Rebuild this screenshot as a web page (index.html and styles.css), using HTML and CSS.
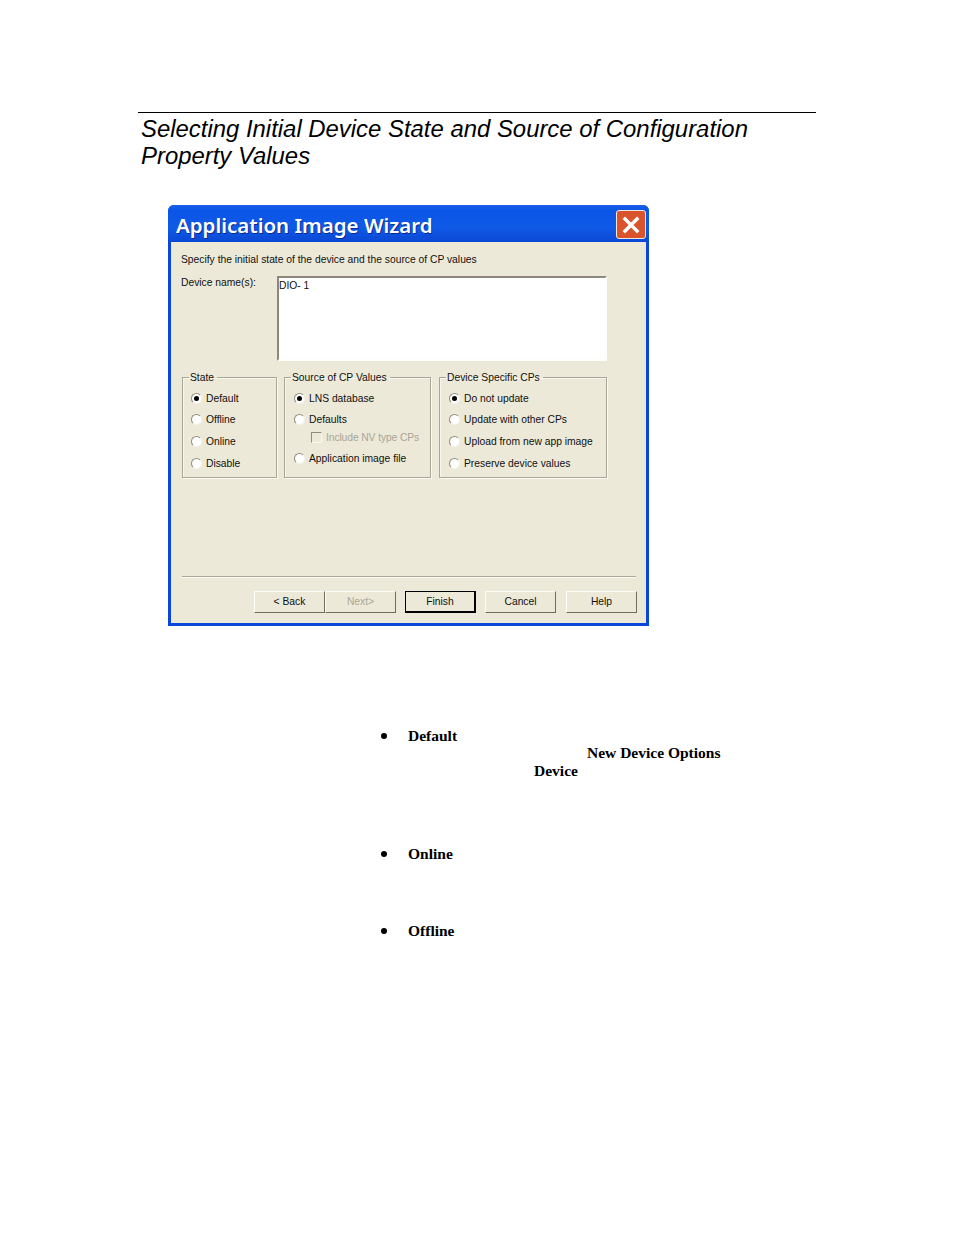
FILE: index.html
```html
<!DOCTYPE html>
<html lang="en">
  <head>
    <meta charset="UTF-8" />
    <meta name="viewport" content="width=device-width, initial-scale=1.0" />
    <title>Selecting Initial Device State</title>
    <link rel="stylesheet" href="styles.css">
  </head>
  <body>
    <main class="page">
      <h2 class="section-title">Selecting Initial Device State and Source of Configuration Property Values</h2>

      <div class="wizard">
        <div class="titlebar">
          <span class="titlebar-text">Application Image Wizard</span>
          <span class="close-btn">
            <svg width="20" height="20" viewBox="0 0 20 20">
              <path d="M4 4 L16 16 M16 4 L4 16" stroke="#fff" stroke-width="3.4" stroke-linecap="square" fill="none" />
            </svg>
          </span>
        </div>
        <div class="wizard-body">
          <p class="intro">Specify the initial state of the device and the source of CP values</p>
          <div class="name-row">
            <span class="name-label">Device name(s):</span>
            <div class="name-box">DIO- 1</div>
          </div>

          <div class="groups">
            <fieldset class="group group-state">
              <legend>State</legend>
              <div class="opt row-a checked"><i class="radio"></i>Default</div>
              <div class="opt row-b"><i class="radio"></i>Offline</div>
              <div class="opt row-c"><i class="radio"></i>Online</div>
              <div class="opt row-c"><i class="radio"></i>Disable</div>
            </fieldset>
            <fieldset class="group group-source">
              <legend>Source of CP Values</legend>
              <div class="opt row-a checked"><i class="radio"></i>LNS database</div>
              <div class="opt row-b"><i class="radio"></i>Defaults</div>
              <div class="opt opt-sub disabled"><i class="check"></i>Include NV type CPs</div>
              <div class="opt opt-last"><i class="radio"></i>Application image file</div>
            </fieldset>
            <fieldset class="group group-device">
              <legend>Device Specific CPs</legend>
              <div class="opt row-a checked"><i class="radio"></i>Do not update</div>
              <div class="opt row-b"><i class="radio"></i>Update with other CPs</div>
              <div class="opt row-c"><i class="radio"></i>Upload from new app image</div>
              <div class="opt row-c"><i class="radio"></i>Preserve device values</div>
            </fieldset>
          </div>

          <div class="separator"></div>

          <div class="buttons">
            <div class="btn">&lt; Back</div>
            <div class="btn btn-off">Next&gt;</div>
            <div class="btn btn-default">Finish</div>
            <div class="btn">Cancel</div>
            <div class="btn">Help</div>
          </div>
        </div>
      </div>

      <ul class="terms">
        <li class="term term-default">
          <b>Default</b>
          <div class="term-line term-line1"><b>New Device Options</b></div>
          <div class="term-line term-line2"><b>Device</b></div>
        </li>
        <li class="term term-online"><b>Online</b></li>
        <li class="term term-offline"><b>Offline</b></li>
      </ul>
    </main>
  </body>
</html>
```

FILE: styles.css
```css
* {
  box-sizing: border-box;
  margin: 0;
  padding: 0;
}
body {
  background: #fff;
  color: #000;
  font-family: "Liberation Serif", serif;
}
.page {
  padding: 112px 138px 0;
  height: 1235px;
  overflow: hidden;
}
.section-title {
  border-top: 1px solid #000;
  padding: 2px 0 0 3px;
  font-family: "Liberation Sans", sans-serif;
  font-size: 23.9px;
  font-style: italic;
  font-weight: 400;
  line-height: 27px;
  width: 678px;
  height: 93px;
}

/* dialog */
.wizard {
  width: 481px;
  height: 421px;
  margin-left: 30px;
  border-radius: 6px 6px 0 0;
  background: #0a46dc;
  padding: 0 2px 2px 2px;
  font-family: "Liberation Sans", sans-serif;
  font-size: 10.3px;
  color: #111;
}
.titlebar {
  height: 37px;
  margin: 0 -2px;
  padding: 2px 3px 0 8px;
  border-radius: 6px 6px 0 0;
  background: linear-gradient(#1b5fe8 0%, #0a55e6 15%, #0f5ae6 60%, #0a48d4 100%);
  display: flex;
  justify-content: space-between;
  align-items: center;
}
.titlebar-text {
  font-family: "Noto Sans", sans-serif;
  font-weight: 600;
  font-size: 20.5px;
  color: #fff;
  text-shadow: 1px 1px 0 #0a2a90;
}
.close-btn {
  width: 30px;
  height: 29px;
  border: 1px solid #f0e8e0;
  border-radius: 3px;
  background: #d9532c;
  display: flex;
  align-items: center;
  justify-content: center;
}
.wizard-body {
  height: 382px;
  background: #ece9d8;
  padding: 11px 11px 0 11px;
  border: 1px solid #0a46dc;
  border-top: 0;
}
.intro {
  line-height: 13px;
  margin-left: -1px;
}
.name-row {
  display: flex;
  margin-top: 10px;
}
.name-label {
  width: 96px;
  margin-left: -1px;
  line-height: 13px;
}
.name-box {
  width: 330px;
  height: 85px;
  background: #fff;
  border: 2px solid;
  border-color: #8c897c #fdfdfa #fdfdfa #8c897c;
  padding: 1px 0;
  line-height: 13px;
}
.groups {
  display: flex;
  margin-top: 9px;
  height: 108px;
}
.group {
  border: 1px solid #a9a797;
  box-shadow: 1px 1px 0 #fbfaf3, inset 1px 1px 0 #f8f7ef;
  height: 108px;
  padding: 0 0 0 8px;
}
.group legend {
  margin-left: -2px;
  padding: 2px 3px 0 1px;
  line-height: 12px;
}
.group-state {
  width: 95px;
}
.group-source {
  width: 147px;
  margin-left: 7px;
  padding-left: 9px;
}
.group-device {
  width: 168px;
  margin-left: 8px;
  padding-left: 9px;
}
.group-source legend,
.group-device legend {
  margin-left: -3px;
}
.opt {
  display: flex;
  align-items: center;
  height: 13px;
  white-space: nowrap;
}
.row-a {
  margin-top: 8px;
}
.row-b {
  margin-top: 8px;
}
.row-c {
  margin-top: 9px;
}
.opt-sub {
  margin-top: 5px;
  padding-left: 17px;
  letter-spacing: -0.1px;
}
.opt-last {
  margin-top: 8px;
}
.disabled {
  color: #a8a698;
}
.radio {
  width: 11px;
  height: 11px;
  margin-right: 4px;
  border-radius: 50%;
  background: #fff;
  border: 1px solid #8f8d80;
  border-right-color: #f4f3ea;
  border-bottom-color: #f4f3ea;
  flex: none;
  display: flex;
  align-items: center;
  justify-content: center;
}
.checked .radio::after {
  content: "";
  width: 5px;
  height: 5px;
  border-radius: 50%;
  background: #000;
}
.check {
  width: 11px;
  height: 11px;
  margin-right: 4px;
  background: #ece9d8;
  border: 1px solid #8f8d80;
  border-right-color: #f8f7ef;
  border-bottom-color: #f8f7ef;
  flex: none;
}
.separator {
  height: 2px;
  margin-top: 98px;
  width: 454px;
  background: #aca899;
  border-bottom: 1px solid #fbfaf3;
}
.buttons {
  display: flex;
  justify-content: flex-end;
  margin-top: 13px;
  width: 455px;
}
.btn {
  width: 71px;
  height: 22px;
  padding-bottom: 2px;
  background: #ece9d8;
  border: 1px solid;
  border-color: #fdfdf8 #6f6d62 #6f6d62 #fdfdf8;
  display: flex;
  align-items: center;
  justify-content: center;
  margin-left: 9px;
}
.btn:last-child {
  margin-left: 10px;
}
.btn-off {
  margin-left: 0;
  color: #a8a698;
}
.btn-default {
  padding-bottom: 0;
  border: 2px solid #000;
  border-top-width: 1px;
  border-left-width: 1px;
}

/* definition list under the dialog */
.terms {
  list-style: none;
  font-size: 15.5px;
  line-height: 18px;
}
.term {
  position: relative;
  padding-left: 270px;
}
.term::before {
  content: "";
  position: absolute;
  left: 243px;
  top: 6px;
  width: 6px;
  height: 6px;
  border-radius: 50%;
  background: #000;
}
.term-default {
  margin-top: 101px;
}
.term-line {
  height: 18px;
}
.term-line1 {
  margin-top: -1px;
  padding-left: 179px;
}
.term-line2 {
  padding-left: 126px;
}
.term-online {
  margin-top: 65px;
}
.term-offline {
  margin-top: 59px;
}
```
